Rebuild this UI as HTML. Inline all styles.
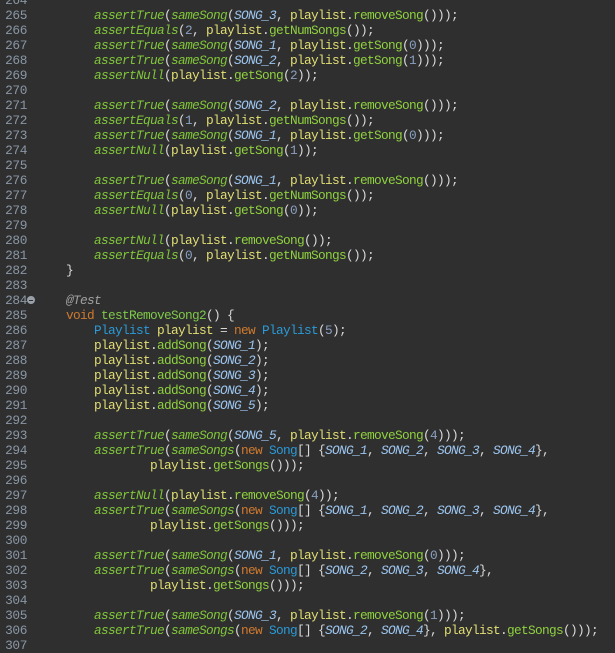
<!DOCTYPE html>
<html><head><meta charset="utf-8"><style>
html,body{margin:0;padding:0;background:#2f2f2f;width:615px;height:644px;overflow:hidden}
.l{position:absolute;left:0;height:15px;line-height:15px;font-family:"Liberation Mono","DejaVu Sans Mono",monospace;font-size:12.8px;letter-spacing:-0.68px;white-space:pre;color:#d9d9d9;margin-top:1px}
.n{position:absolute;left:0;width:27px;text-align:right;color:#8a97a6;letter-spacing:-0.4px}
.c{position:absolute;left:38px}
.a{font-style:italic;color:#80c63a}
.s{font-style:italic;color:#9dc6f0}
.m{color:#8fd13f}
.v{color:#e3df74}
.k{color:#cf7a2e}
.t{color:#2a9ad8}
.u{color:#8aa0c0}
.g{font-style:italic;color:#a0a0a0}
.f{color:#7ec94a}
.fold{position:absolute;left:27px;top:3px;width:8px;height:8px;border-radius:50%;background:#9aa0a8}
.fold:after{content:"";position:absolute;left:2px;top:3.5px;width:4px;height:1px;background:#2f2f2f}
</style></head><body>
<div class="l" style="top:-8px"><span class="n">264</span></div>
<div class="l" style="top:7px"><span class="n">265</span><span class="c">        <i class="a">assertTrue</i>(<i class="a">sameSong</i>(<i class="s">SONG_3</i>, <span class="v">playlist</span>.<span class="m">removeSong</span>()));</span></div>
<div class="l" style="top:22px"><span class="n">266</span><span class="c">        <i class="a">assertEquals</i>(<span class="u">2</span>, <span class="v">playlist</span>.<span class="m">getNumSongs</span>());</span></div>
<div class="l" style="top:37px"><span class="n">267</span><span class="c">        <i class="a">assertTrue</i>(<i class="a">sameSong</i>(<i class="s">SONG_1</i>, <span class="v">playlist</span>.<span class="m">getSong</span>(<span class="u">0</span>)));</span></div>
<div class="l" style="top:52px"><span class="n">268</span><span class="c">        <i class="a">assertTrue</i>(<i class="a">sameSong</i>(<i class="s">SONG_2</i>, <span class="v">playlist</span>.<span class="m">getSong</span>(<span class="u">1</span>)));</span></div>
<div class="l" style="top:67px"><span class="n">269</span><span class="c">        <i class="a">assertNull</i>(<span class="v">playlist</span>.<span class="m">getSong</span>(<span class="u">2</span>));</span></div>
<div class="l" style="top:82px"><span class="n">270</span></div>
<div class="l" style="top:97px"><span class="n">271</span><span class="c">        <i class="a">assertTrue</i>(<i class="a">sameSong</i>(<i class="s">SONG_2</i>, <span class="v">playlist</span>.<span class="m">removeSong</span>()));</span></div>
<div class="l" style="top:112px"><span class="n">272</span><span class="c">        <i class="a">assertEquals</i>(<span class="u">1</span>, <span class="v">playlist</span>.<span class="m">getNumSongs</span>());</span></div>
<div class="l" style="top:127px"><span class="n">273</span><span class="c">        <i class="a">assertTrue</i>(<i class="a">sameSong</i>(<i class="s">SONG_1</i>, <span class="v">playlist</span>.<span class="m">getSong</span>(<span class="u">0</span>)));</span></div>
<div class="l" style="top:142px"><span class="n">274</span><span class="c">        <i class="a">assertNull</i>(<span class="v">playlist</span>.<span class="m">getSong</span>(<span class="u">1</span>));</span></div>
<div class="l" style="top:157px"><span class="n">275</span></div>
<div class="l" style="top:172px"><span class="n">276</span><span class="c">        <i class="a">assertTrue</i>(<i class="a">sameSong</i>(<i class="s">SONG_1</i>, <span class="v">playlist</span>.<span class="m">removeSong</span>()));</span></div>
<div class="l" style="top:187px"><span class="n">277</span><span class="c">        <i class="a">assertEquals</i>(<span class="u">0</span>, <span class="v">playlist</span>.<span class="m">getNumSongs</span>());</span></div>
<div class="l" style="top:202px"><span class="n">278</span><span class="c">        <i class="a">assertNull</i>(<span class="v">playlist</span>.<span class="m">getSong</span>(<span class="u">0</span>));</span></div>
<div class="l" style="top:217px"><span class="n">279</span></div>
<div class="l" style="top:232px"><span class="n">280</span><span class="c">        <i class="a">assertNull</i>(<span class="v">playlist</span>.<span class="m">removeSong</span>());</span></div>
<div class="l" style="top:247px"><span class="n">281</span><span class="c">        <i class="a">assertEquals</i>(<span class="u">0</span>, <span class="v">playlist</span>.<span class="m">getNumSongs</span>());</span></div>
<div class="l" style="top:262px"><span class="n">282</span><span class="c">    }</span></div>
<div class="l" style="top:277px"><span class="n">283</span></div>
<div class="l" style="top:292px"><span class="n">284</span><span class="fold"></span><span class="c">    <i class="g">@Test</i></span></div>
<div class="l" style="top:307px"><span class="n">285</span><span class="c">    <span class="k">void</span> <span class="f">testRemoveSong2</span>() {</span></div>
<div class="l" style="top:322px"><span class="n">286</span><span class="c">        <span class="t">Playlist</span> <span class="v">playlist</span> = <span class="k">new</span> <span class="t">Playlist</span>(<span class="u">5</span>);</span></div>
<div class="l" style="top:337px"><span class="n">287</span><span class="c">        <span class="v">playlist</span>.<span class="m">addSong</span>(<i class="s">SONG_1</i>);</span></div>
<div class="l" style="top:352px"><span class="n">288</span><span class="c">        <span class="v">playlist</span>.<span class="m">addSong</span>(<i class="s">SONG_2</i>);</span></div>
<div class="l" style="top:367px"><span class="n">289</span><span class="c">        <span class="v">playlist</span>.<span class="m">addSong</span>(<i class="s">SONG_3</i>);</span></div>
<div class="l" style="top:382px"><span class="n">290</span><span class="c">        <span class="v">playlist</span>.<span class="m">addSong</span>(<i class="s">SONG_4</i>);</span></div>
<div class="l" style="top:397px"><span class="n">291</span><span class="c">        <span class="v">playlist</span>.<span class="m">addSong</span>(<i class="s">SONG_5</i>);</span></div>
<div class="l" style="top:412px"><span class="n">292</span></div>
<div class="l" style="top:427px"><span class="n">293</span><span class="c">        <i class="a">assertTrue</i>(<i class="a">sameSong</i>(<i class="s">SONG_5</i>, <span class="v">playlist</span>.<span class="m">removeSong</span>(<span class="u">4</span>)));</span></div>
<div class="l" style="top:442px"><span class="n">294</span><span class="c">        <i class="a">assertTrue</i>(<i class="a">sameSongs</i>(<span class="k">new</span> <span class="t">Song</span>[] {<i class="s">SONG_1</i>, <i class="s">SONG_2</i>, <i class="s">SONG_3</i>, <i class="s">SONG_4</i>},</span></div>
<div class="l" style="top:457px"><span class="n">295</span><span class="c">                <span class="v">playlist</span>.<span class="m">getSongs</span>()));</span></div>
<div class="l" style="top:472px"><span class="n">296</span></div>
<div class="l" style="top:487px"><span class="n">297</span><span class="c">        <i class="a">assertNull</i>(<span class="v">playlist</span>.<span class="m">removeSong</span>(<span class="u">4</span>));</span></div>
<div class="l" style="top:502px"><span class="n">298</span><span class="c">        <i class="a">assertTrue</i>(<i class="a">sameSongs</i>(<span class="k">new</span> <span class="t">Song</span>[] {<i class="s">SONG_1</i>, <i class="s">SONG_2</i>, <i class="s">SONG_3</i>, <i class="s">SONG_4</i>},</span></div>
<div class="l" style="top:517px"><span class="n">299</span><span class="c">                <span class="v">playlist</span>.<span class="m">getSongs</span>()));</span></div>
<div class="l" style="top:532px"><span class="n">300</span></div>
<div class="l" style="top:547px"><span class="n">301</span><span class="c">        <i class="a">assertTrue</i>(<i class="a">sameSong</i>(<i class="s">SONG_1</i>, <span class="v">playlist</span>.<span class="m">removeSong</span>(<span class="u">0</span>)));</span></div>
<div class="l" style="top:562px"><span class="n">302</span><span class="c">        <i class="a">assertTrue</i>(<i class="a">sameSongs</i>(<span class="k">new</span> <span class="t">Song</span>[] {<i class="s">SONG_2</i>, <i class="s">SONG_3</i>, <i class="s">SONG_4</i>},</span></div>
<div class="l" style="top:577px"><span class="n">303</span><span class="c">                <span class="v">playlist</span>.<span class="m">getSongs</span>()));</span></div>
<div class="l" style="top:592px"><span class="n">304</span></div>
<div class="l" style="top:607px"><span class="n">305</span><span class="c">        <i class="a">assertTrue</i>(<i class="a">sameSong</i>(<i class="s">SONG_3</i>, <span class="v">playlist</span>.<span class="m">removeSong</span>(<span class="u">1</span>)));</span></div>
<div class="l" style="top:622px"><span class="n">306</span><span class="c">        <i class="a">assertTrue</i>(<i class="a">sameSongs</i>(<span class="k">new</span> <span class="t">Song</span>[] {<i class="s">SONG_2</i>, <i class="s">SONG_4</i>}, <span class="v">playlist</span>.<span class="m">getSongs</span>()));</span></div>
<div class="l" style="top:637px"><span class="n">307</span></div>
</body></html>
